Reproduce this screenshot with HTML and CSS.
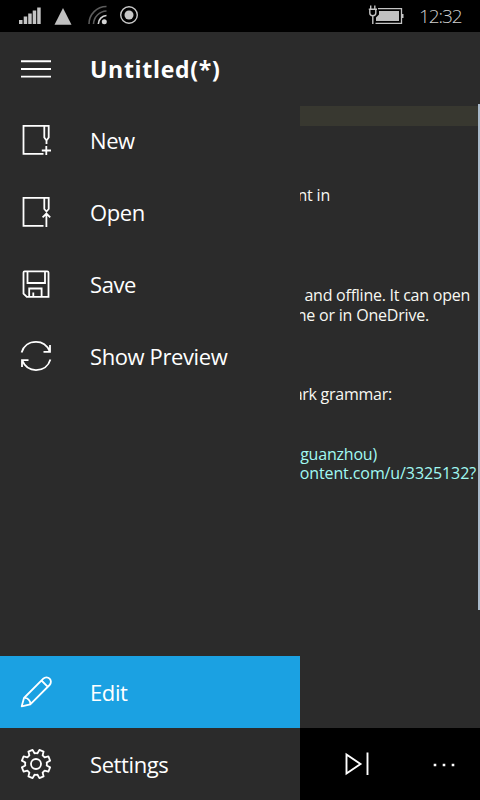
FILE: index.html
```html
<!DOCTYPE html>
<html lang="en">
<head>
<meta charset="utf-8">
<title>Untitled(*)</title>
<link rel="stylesheet" href="styles.css">
</head>
<body>
<div class="phone">
  <header class="status">
    <svg class="status-left" width="150" height="32" viewBox="0 0 150 32">
      <path d="M19 20h3.500v4H19zM23.700 16.500h3.500V24h-3.500zM28.200 13.500h3.500V24h-3.500zM32.700 10.500h3.500V24h-3.500zM37.200 7.500h3.500V24h-3.500z" fill="#c4c4c4"/>
      <path d="M63 8L71.500 24.700H54.500z" fill="#c0c0c0"/>
      <g fill="none" stroke-width="1.600">
        <path d="M89 24A17.500 17.500 0 0 1 106.500 6.500M93.500 24A13.500 13.500 0 0 1 106.500 11" stroke="#5c5c5c"/>
        <path d="M98.300 24A8.700 8.700 0 0 1 106.500 15.500" stroke="#d4d4d4"/>
      </g>
      <circle cx="104.300" cy="21.700" r="2.500" fill="#d4d4d4"/>
      <circle cx="129" cy="15" r="8.300" fill="none" stroke="#c8c8c8" stroke-width="1.400"/>
      <circle cx="129" cy="15" r="4.500" fill="#c8c8c8"/>
    </svg>
    <div class="status-right">
      <svg width="36" height="32" viewBox="368 0 36 32">
        <path d="M378 8.600H401.500V23.300H375.500" fill="none" stroke="#c4c4c4" stroke-width="1.300"/>
        <path d="M379 11H399V21H376V17.500L379 14.500z" fill="#c0c0c0"/>
        <path d="M402 14h1.500v4H402z" fill="#c4c4c4"/>
        <path d="M370.700 5.500V9M374.800 5.500V9M368.800 9.200H377M369.800 9.500V13Q369.800 15.700 372.800 15.700Q375.800 15.700 375.800 13V9.500M372.800 16V24" fill="none" stroke="#c4c4c4" stroke-width="1.400"/>
      </svg>
      <span class="clock">12:32</span>
    </div>
  </header>
  <div class="shell">
    <nav class="pane">
      <div class="item">
        <svg class="icon" viewBox="0 0 32 32"><path d="M1 9.300H31M1 17H31M1 24.600H31" stroke-width="1.900"/></svg>
        <span class="title">Untitled(*)</span>
      </div>
      <div class="item">
        <svg class="icon" viewBox="0 0 32 32"><path d="M23.500 29.800H3.500V1.800H28.700V13.500L26.500 16.500L24.300 13.500V2M26.500 16.500V20M26.300 22V31M21.800 26.500H31"/></svg>
        <span class="label new">New</span>
      </div>
      <div class="item">
        <svg class="icon" viewBox="0 0 32 32"><path d="M23.500 29.800H3.500V1.800H28.700V13L26.500 15.500L24.300 13V2M26.400 31V17M22.600 21.300L26.400 17.500L30.200 21.300"/></svg>
        <span class="label open">Open</span>
      </div>
      <div class="item">
        <svg class="icon" viewBox="0 0 32 32"><path d="M3.500 4.500Q3.500 3.400 4.600 3.400H27.200Q28.500 3.400 28.500 4.600V28.900H6.800L3.500 25.600zM7.500 3.800V15H25V3.800M9.200 28.500V20.500H21.600V28.500M13.300 28.500V24.500"/></svg>
        <span class="label save">Save</span>
      </div>
      <div class="item">
        <svg class="icon" viewBox="0 0 32 32"><path d="M1.600 12.500C3.500 6 9 1.900 16 1.900C22 1.900 27 5 29.700 11.300M30 5V11.800H23.500M30.400 19.500C28.500 26 23 30.100 16 30.100C10 30.100 5 27 2.300 20.700M2 27V20.200H8.500"/></svg>
        <span class="label preview">Show Preview</span>
      </div>
      <div class="spring"></div>
      <div class="item selected">
        <svg class="icon" viewBox="0 0 32 32"><path d="M1.700 30.300L4 22L23.300 2.700A4.450 4.450 0 0 1 29.600 9L10.300 28.300zM4 22C7.500 21.500 10.800 24.800 10.300 28.300M21.500 4.500L27.800 10.800" stroke-linejoin="round"/></svg>
        <span class="label edit">Edit</span>
      </div>
      <div class="item">
        <svg class="icon" viewBox="0 0 32 32"><circle cx="16" cy="16" r="5"/><path stroke-linejoin="round" d="M12.600 1.900L14.500 5.300Q16 5 17.500 5.300L19.400 1.900L23.600 3.600L22.600 7.400L24.600 9.400L28.400 8.400L30.100 12.600L26.700 14.500Q27 16 26.700 17.500L30.100 19.400L28.400 23.600L24.600 22.600L22.600 24.600L23.600 28.400L19.400 30.100L17.500 26.700Q16 27 14.500 26.700L12.600 30.100L8.400 28.400L9.400 24.600L7.400 22.600L3.600 23.600L1.900 19.400L5.300 17.500Q5 16 5.300 14.500L1.900 12.600L3.600 8.400L7.400 9.400L9.400 7.400L8.400 3.600z"/></svg>
        <span class="label settings">Settings</span>
      </div>
    </nav>
    <main class="content">
      <div class="editor">
        <div class="line current"></div>
        <div class="line"></div><div class="line"></div><div class="line"></div>
        <div class="line l-in"><span>nt in</span></div>
        <div class="line"></div><div class="line"></div><div class="line"></div><div class="line"></div>
        <div class="line l-offline"><span>and offline. It can open</span></div>
        <div class="line l-drive"><span>ne or in OneDrive.</span></div>
        <div class="line"></div><div class="line"></div><div class="line"></div>
        <div class="line l-grammar"><span>ark grammar:</span></div>
        <div class="line"></div><div class="line"></div>
        <div class="line link l-user"><span>guanzhou)</span></div>
        <div class="line link l-url"><span>content.com/u/3325132?</span></div>
        <div class="scrollbar"></div>
      </div>
      <footer class="appbar">
        <svg width="180" height="72" viewBox="0 0 180 72" fill="none" stroke="#fff" stroke-width="1.900">
          <path d="M46.500 26.500V45.500L60.500 36zM67.500 24.500V47"/>
          <path d="M133.700 37h2.600M142.700 37h2.600M151.700 37h2.600" stroke-width="2.600"/>
        </svg>
      </footer>
    </main>
  </div>
</div>
</body>
</html>
```
FILE: styles.css
```css
* { box-sizing: border-box; }
body { margin: 0; background: #2b2b2b; font-family: "Open Sans", "Noto Sans", sans-serif; color: #fff; }
svg { display: block; flex: none; }
.phone { width: 480px; height: 800px; display: flex; flex-direction: column; overflow: hidden; }
.status { height: 32px; background: #000; display: flex; justify-content: space-between; }
.status-right { display: flex; width: 112px; gap: 15px; }
.clock { font-weight: 300; font-size: 19px; line-height: 32px; letter-spacing: -1.1px; color: #d0d0d0; white-space: nowrap; }
.shell { flex: 1; display: flex; min-height: 0; }
.pane { width: 300px; flex: none; display: flex; flex-direction: column; background: #2b2b2b; }
.item { height: 72px; display: flex; align-items: center; padding-left: 20px; gap: 38px; }
.icon { width: 32px; height: 32px; fill: none; stroke: #fff; stroke-width: 1.8; }
.label { font-size: 22px; line-height: 30px; letter-spacing: -0.4px; white-space: nowrap; }
.title { font-size: 23px; line-height: 30px; padding-top: 1px; font-weight: 700; letter-spacing: 0.7px; }
.spring { flex: 1; }
.selected { background: #1ba1e2; }
.content { flex: 1; min-width: 0; display: flex; flex-direction: column; }
.editor { flex: 1; position: relative; padding-top: 74px; background: #2b2b2b; overflow: hidden; }
.line { height: 19.86px; display: flex; justify-content: flex-end; font-size: 16px; line-height: 20px; color: #f8f8f2; white-space: nowrap; }
.current { background: #383830; }
.link { color: #a1f9f2; }
.l-in { padding-right: 150px; letter-spacing: -0.2px; }
.l-offline { padding-right: 10px; letter-spacing: -0.24px; }
.l-drive { padding-right: 51px; letter-spacing: -0.2px; }
.l-grammar { padding-right: 88px; letter-spacing: -0.25px; }
.l-user { padding-right: 103px; letter-spacing: -0.2px; }
.l-url { padding-right: 4px; letter-spacing: -0.1px; }
.scrollbar { position: absolute; right: 0; top: 72px; width: 2px; height: 506px; background: #a9bacb; }
.appbar { height: 72px; background: #000; }
```
